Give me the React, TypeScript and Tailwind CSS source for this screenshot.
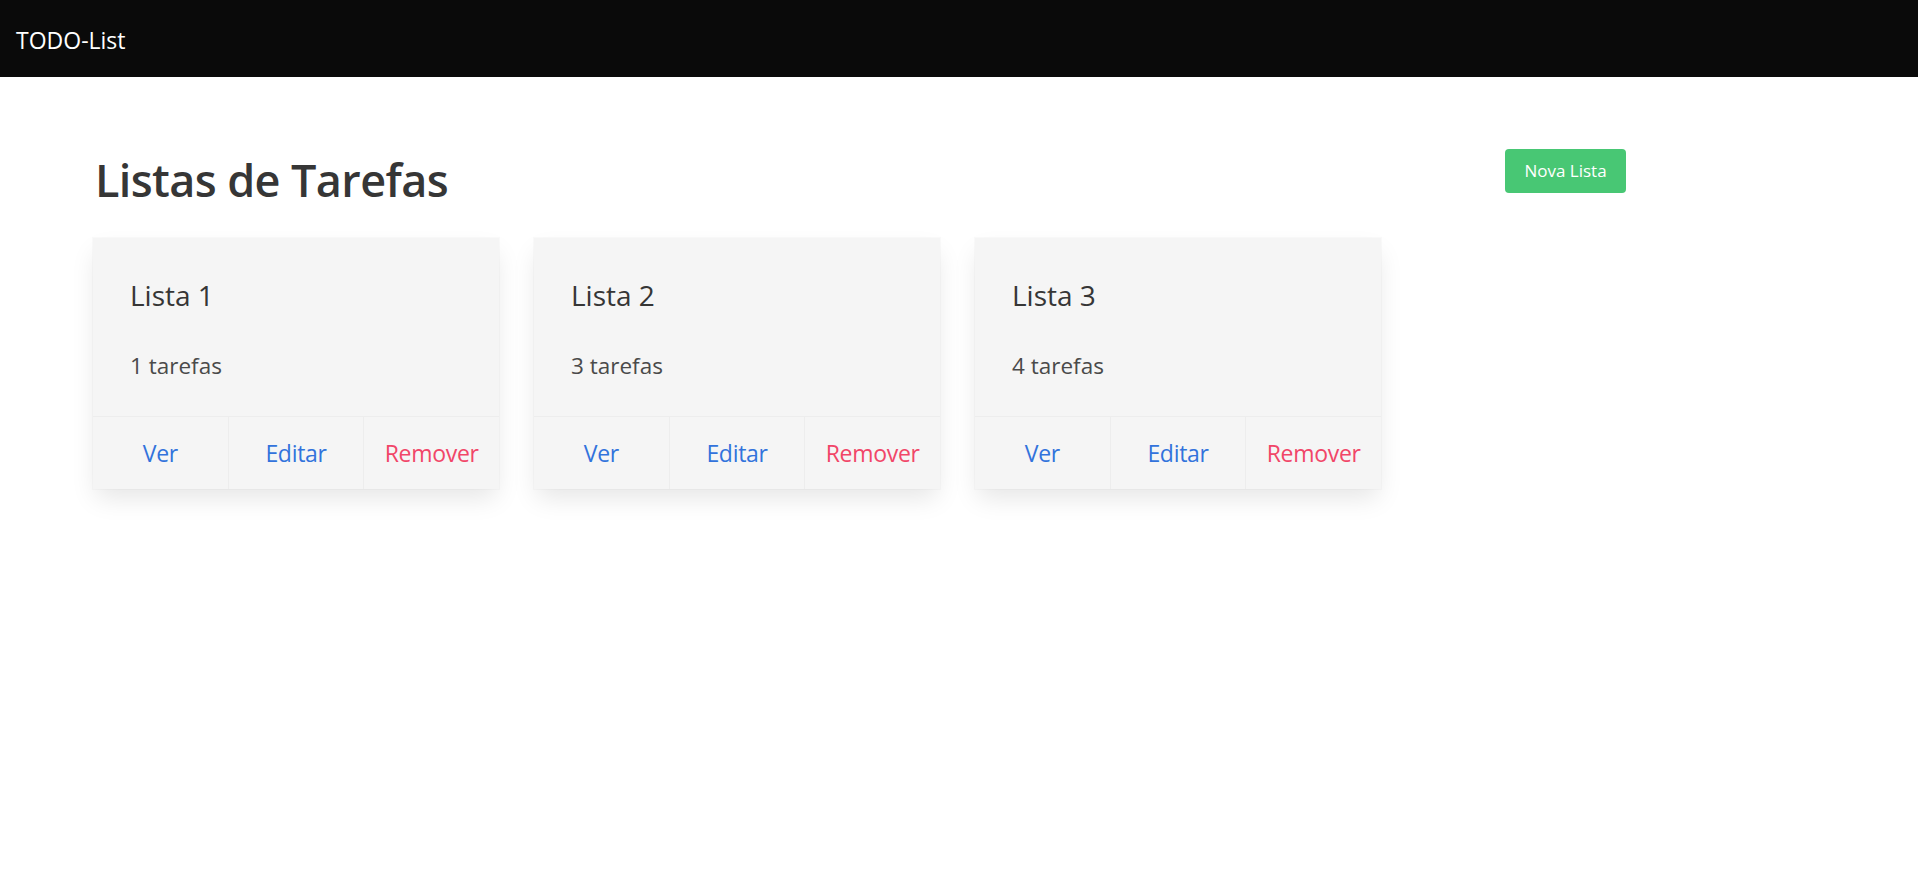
import React from "react";

const lists = [
  { name: "Lista 1", count: 1 },
  { name: "Lista 2", count: 3 },
  { name: "Lista 3", count: 4 },
];

export default function App() {
  return (
    <div
      className="min-h-screen bg-white text-[#4a4a4a]"
      style={{ fontFamily: '"Segoe UI", "Open Sans", "Noto Sans", sans-serif' }}
    >
      <nav className="h-[77px] bg-[#0a0a0a] flex items-center">
        <span className="pl-[16px] pt-[2px] text-[23px] leading-[36px] text-white">TODO-List</span>
      </nav>

      <section className="pt-[72px] pl-[93px]">
        <div className="flex items-start w-[1533px] justify-between">
          <h1 className="mt-[4px] text-[45px] leading-[54px] tracking-[-0.6px] font-semibold text-[#363636] pl-[2px]">
            Listas de Tarefas
          </h1>
          <button className="w-[121px] h-[44px] rounded-[4px] bg-[#48c774] text-white text-[17px] flex items-center justify-center">
            Nova Lista
          </button>
        </div>

        <div className="mt-[31px] flex gap-[35px]">
          {lists.map((l) => (
            <div
              key={l.name}
              className="w-[406px] bg-[#f5f5f5] shadow-[0_12px_24px_-3px_rgba(10,10,10,0.1),0_0_0_1px_rgba(10,10,10,0.02)]"
            >
              <div className="px-[37px] pt-[40px] pb-[32px]">
                <p className="text-[28px] leading-[34px] text-[#363636] mb-[36px]">{l.name}</p>
                <p className="text-[22.5px] leading-[36px] text-[#4a4a4a]">{l.count} tarefas</p>
              </div>
              <div className="flex border-t border-[#ededed]">
                <a className="flex-1 h-[72px] flex items-center justify-center text-[23px] tracking-[-0.3px] text-[#3273dc] border-r border-[#ededed]">
                  Ver
                </a>
                <a className="flex-1 h-[72px] flex items-center justify-center text-[23px] tracking-[-0.3px] text-[#3273dc] border-r border-[#ededed]">
                  Editar
                </a>
                <a className="flex-1 h-[72px] flex items-center justify-center text-[23px] tracking-[-0.3px] text-[#f14668]">
                  Remover
                </a>
              </div>
            </div>
          ))}
        </div>
      </section>
    </div>
  );
}
